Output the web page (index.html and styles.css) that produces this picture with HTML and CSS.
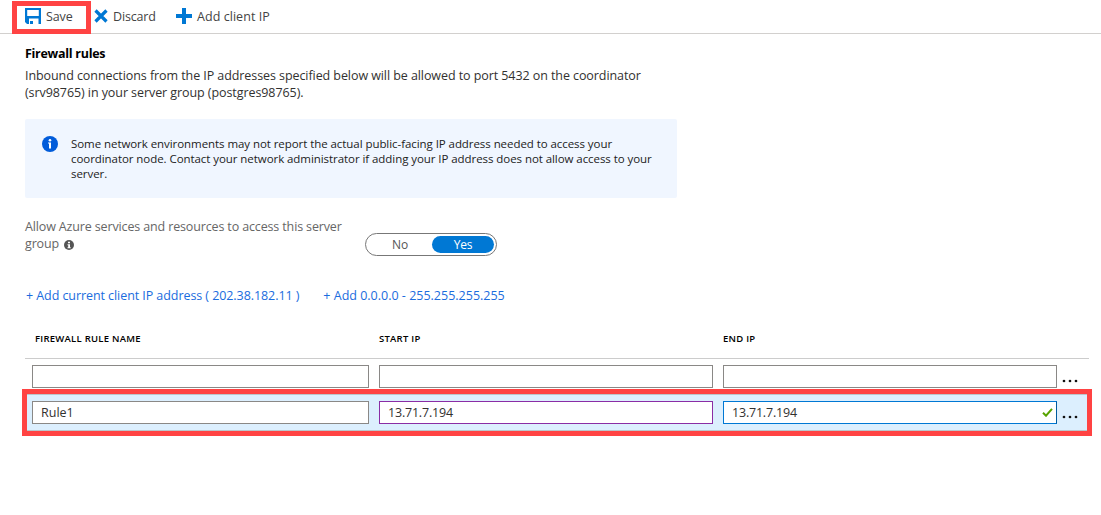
FILE: index.html
```html
<!DOCTYPE html>
<html lang="en">
<head>
<meta charset="utf-8">
<title>Firewall rules</title>
<link rel="stylesheet" href="styles.css">
</head>
<body>
<header class="toolbar">
  <button class="command save"><svg width="16" height="16" viewBox="0 0 16 16"><path fill="#0078d4" fill-rule="evenodd" d="M0 0h16v16h-2.500v-5.500H4V16H2l-2-2zM2.200 2v6h11.600V2z"/><path fill="#0078d4" d="M5 13h3v3H5z"/></svg><span>Save</span></button>
  <button class="command discard"><svg width="14" height="14" viewBox="0 0 14 14"><path d="M1.500 1.500l11 11M12.500 1.500l-11 11" stroke="#0078d4" stroke-width="3.200"/></svg><span>Discard</span></button>
  <button class="command add"><svg width="16" height="16" viewBox="0 0 16 16"><path fill="#0078d4" d="M6 0h4v6h6v4h-6v6H6v-6H0V6h6z"/></svg><span>Add client IP</span></button>
  <div class="highlight highlight-save"></div>
</header>
<main class="content">
  <h1 class="title"><span>Firewall rules</span></h1>
  <p class="intro"><span>Inbound connections from the IP addresses specified below will be allowed to port 5432 on the coordinator</span><br><span>(srv98765) in your server group (postgres98765).</span></p>
  <section class="notice">
    <svg width="16" height="16" viewBox="0 0 16 16"><circle cx="8" cy="8" r="8" fill="#015cda"/><circle cx="8" cy="4.200" r="1.300" fill="#fff"/><path d="M6 6.500h3v6H7v-5H6z" fill="#fff"/></svg>
    <p class="notice-text"><span>Some network environments may not report the actual public-facing IP address needed to access your</span><br><span>coordinator node. Contact your network administrator if adding your IP address does not allow access to your</span><br><span>server.</span></p>
  </section>
  <section class="access">
    <p class="access-label"><span>Allow Azure services and resources to access this server</span><br><span>group</span> <svg width="10" height="10" viewBox="0 0 10 10"><circle cx="5" cy="5" r="5" fill="#555"/><path d="M4 1.700h2v1.600H4zM3.500 4.200H6v3h.7v1H3.500v-1h.7v-2h-.7z" fill="#fff"/></svg></p>
    <div class="toggle"><span class="option">No</span><span class="option selected">Yes</span></div>
  </section>
  <nav class="links"><a class="link-current">+ Add current client IP address ( 202.38.182.11 )</a><a class="link-all">+ Add 0.0.0.0 - 255.255.255.255</a></nav>
  <section class="table">
    <div class="row head"><span>FIREWALL RULE NAME</span><span>START IP</span><span>END IP</span></div>
    <div class="row blank"><div class="field"></div><div class="field"></div><div class="field"></div><svg class="more" width="16" height="4" viewBox="0 0 16 4"><g fill="#111"><circle cx="2" cy="2" r="1.350"/><circle cx="8" cy="2" r="1.350"/><circle cx="14" cy="2" r="1.350"/></g></svg></div>
    <div class="row active"><div class="field"><span>Rule1</span></div><div class="field changed"><span class="ip">13.71.7.194</span></div><div class="field focused"><span class="ip">13.71.7.194</span><svg width="11" height="9" viewBox="0 0 11 9"><path d="M1 4.700l3 3L10 .8" fill="none" stroke="#57a300" stroke-width="2"/></svg></div><svg class="more" width="16" height="4" viewBox="0 0 16 4"><g fill="#111"><circle cx="2" cy="2" r="1.350"/><circle cx="8" cy="2" r="1.350"/><circle cx="14" cy="2" r="1.350"/></g></svg>
      <div class="highlight highlight-row"></div>
    </div>
  </section>
</main>
</body>
</html>
```
FILE: styles.css
```css
* { box-sizing: border-box; }
body { margin: 0; width: 1101px; height: 515px; overflow: hidden; background: #fff; color: #323130; font: 12.5px/17px "Open Sans", "Noto Sans", sans-serif; white-space: nowrap; }
p, h1 { margin: 0; }
svg { flex: none; display: block; }
.toolbar { position: relative; display: flex; align-items: center; height: 34px; padding: 0 0 1px 25px; border-bottom: 1px solid #d2d0ce; }
.command { display: flex; align-items: center; padding: 0; border: 0; background: none; color: #444; font: inherit; }
.command span { display: block; }
.save { width: 69px; gap: 5px; letter-spacing: -0.1px; }
.discard { width: 82px; gap: 5px; letter-spacing: -0.15px; }
.add { gap: 5px; letter-spacing: 0.05px; }
.highlight { position: absolute; border: 5px solid #ff4343; }
.highlight-save { left: 12px; top: 1px; width: 79px; height: 33px; }
.content { padding: 11px 12px 0 25px; }
.title { font-size: 12.5px; line-height: 17px; font-weight: 700; letter-spacing: -0.28px; color: #000; }
.intro { margin-top: 5px; letter-spacing: -0.075px; }
.notice { display: flex; gap: 13px; width: 652px; height: 79px; margin-top: 18px; padding: 17px; background: #f0f6ff; border-radius: 2px; color: #222; font-size: 11.5px; line-height: 15px; letter-spacing: -0.063px; }
.access { display: flex; margin-top: 20px; color: #666; letter-spacing: -0.14px; }
.access-label { width: 340px; }
.access-label svg { display: inline-block; margin-left: 2px; vertical-align: -2px; }
.toggle { display: flex; width: 132px; height: 23px; margin-top: 15px; padding: 2px; border: 1px solid #777; border-radius: 12px; line-height: 17px; font-size: 12px; text-align: center; }
.option { width: 64px; color: #555; }
.selected { width: 62px; border-radius: 9px; background: #0078d4; color: #fff; }
.links { display: flex; gap: 24px; margin-top: 31px; padding-left: 1px; color: #1a6cde; }
.link-current { letter-spacing: -0.07px; }
.table { margin-top: 26px; }
.row { display: grid; grid-template-columns: 337px 334px 334px auto; column-gap: 10px; padding-left: 7px; }
.head { height: 29px; padding: 1px 0 0 10px; grid-template-columns: 334px 334px 334px; border-bottom: 1px solid #ccc; font-size: 9.5px; line-height: 16px; font-weight: 600; letter-spacing: 0.25px; color: #000; }
.blank { height: 35px; padding-top: 6px; }
.field { display: flex; align-items: center; justify-content: space-between; height: 23px; padding: 0 3px 0 8px; border: 1px solid #8a8886; background: #fff; }
.more { margin: 14px 0 0 -5px; }
.active { position: relative; width: 1060px; height: 37px; margin: 0 0 0 2px; padding: 6px 0 0 5px; border: 1px solid #bbc5cb; border-width: 1px 0; background: #dceffe; }
.ip { letter-spacing: -0.2px; }
.changed { border-color: #8a2da5; }
.focused { border-color: #0078d4; border-right-color: #005a9e; }
.highlight-row { left: -5px; top: -6px; width: 1070px; height: 47px; }
```
